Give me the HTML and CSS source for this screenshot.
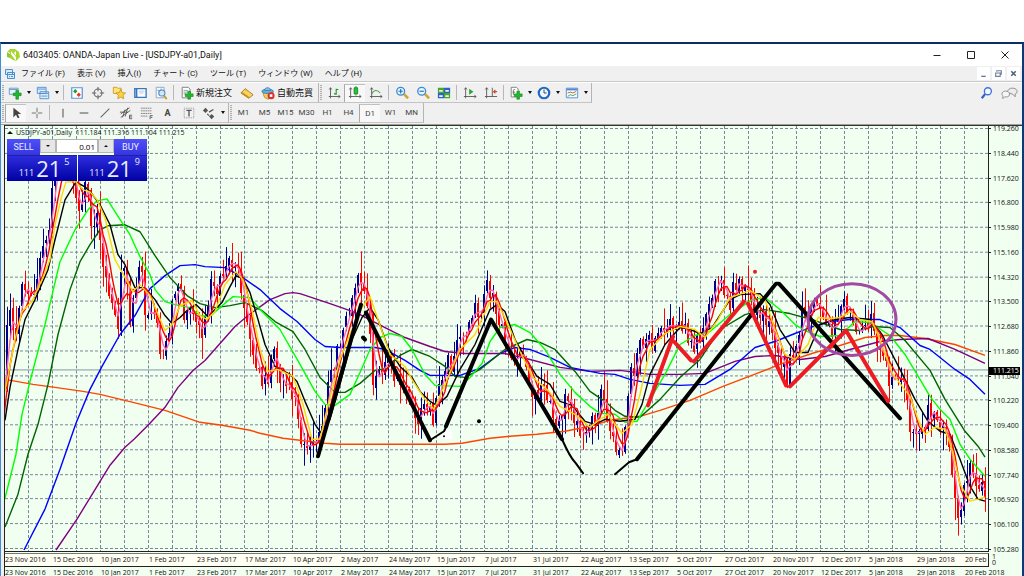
FILE: index.html
```
<!DOCTYPE html>
<html lang="ja">
<head>
    <meta charset="UTF-8">
    <meta name="viewport" content="width=device-width, initial-scale=1.0">
    <title>6403405: OANDA-Japan Live - [USDJPY-a01,Daily]</title>
    <link rel="stylesheet" href="styles.css">
</head>
<body>

<div class="window">
    <header class="titlebar">
        <svg class="logo" viewBox="0 0 14 14"><path d="M4 1h5l4 3 1 5-4 4-3-1-6-4V4z" fill="#a8d52d"/><path d="M4 5v7l-3-2V3zM5 3l5 6v4L5 6zM10 3v5L8 5z" fill="#fff"/><path d="M1 4l3 2v4L1 9z" fill="#8cc63f"/></svg>
        <h1>6403405: OANDA-Japan Live - [USDJPY-a01,Daily]</h1>
        <div class="window-buttons">
            <button type="button" aria-label="Minimize"><svg viewBox="0 0 10 10"><path d="M1.5 5.5h7" stroke="#222"/></svg></button>
            <button type="button" aria-label="Maximize"><svg viewBox="0 0 10 10"><path d="M1.5 1.5h7v7h-7z" fill="none" stroke="#222"/></svg></button>
            <button type="button" aria-label="Close"><svg viewBox="0 0 10 10"><path d="M1.5 1.5l7 7m0-7l-7 7" stroke="#222"/></svg></button>
        </div>
    </header>

    <nav class="menubar">
        <svg class="menu-logo" viewBox="0 0 12 12"><path d="M1.5 1.5h7v5h-7zM3.5 4.5h7v6h-7z" fill="#dcecfa" stroke="#4a8fd4"/><path d="M4 6.5h6M5 8.5h1m1 0h2" stroke="#4a8fd4"/></svg>
        <button type="button">ファイル (F)</button>
        <button type="button">表示 (V)</button>
        <button type="button">挿入(I)</button>
        <button type="button">チャート (C)</button>
        <button type="button">ツール (T)</button>
        <button type="button">ウィンドウ (W)</button>
        <button type="button">ヘルプ (H)</button>
        <div class="mdi-buttons">
            <button type="button" aria-label="Minimize chart"><svg viewBox="0 0 8 8"><path d="M2 6.5h4" stroke="#47637f"/></svg></button>
            <button type="button" aria-label="Restore chart"><svg viewBox="0 0 8 8"><path d="M2.5 2.5v-1h4v3h-1M1.5 3.5h4v3h-4z" fill="none" stroke="#6c8299"/></svg></button>
            <button type="button" aria-label="Close chart"><svg viewBox="0 0 8 8"><path d="M2 2l4 4m0-4L2 6" stroke="#47637f" stroke-width="1.4"/></svg></button>
        </div>
    </nav>

    <div class="toolbars">
        <div class="toolbar-row">
            <div class="toolbar">
                <button type="button" class="tool drop" aria-label="New chart"><svg viewBox="0 0 16 16"><path d="M1.500 2.500h10v7h-10z" fill="#e7f2fc" stroke="#5f94c9"/><path d="M2 4h9" stroke="#5f94c9"/><path d="M9 5h3v3h3v3h-3v4H9v-4H6V8h3z" fill="#1dbb2c" stroke="#13851e" stroke-width=".7"/></svg></button>
                <button type="button" class="tool drop" aria-label="Profiles"><svg viewBox="0 0 16 16"><path d="M1.500 1.500h10v7h-10zM4.500 6.500h10v8h-10z" fill="#dfeefb" stroke="#4d8acb"/><path d="M2 3.500h9M5 8.500h9M6 11.500h7" stroke="#4d8acb"/></svg></button>
                <span class="separator"></span>
                <button type="button" class="tool" aria-label="Market watch"><svg viewBox="0 0 16 16"><path d="M2 2h12v12H2z" fill="#fff" stroke="#5796d6" stroke-width="1.4"/><path d="M6 3.500l2.500 2.500L6 8.500 3.500 6z" fill="#12a72a"/><path d="M10 7.500l2.500 2.500-2.500 2.500L7.500 10z" fill="#e23a25"/></svg></button>
                <button type="button" class="tool" aria-label="Data window"><svg viewBox="0 0 16 16"><circle cx="8" cy="8" r="4.500" fill="none" stroke="#666" stroke-width="1.200"/><path d="M8 1v5m0 4v5M1 8h5m4 0h5" stroke="#666" stroke-width="1.200"/></svg></button>
                <button type="button" class="tool" aria-label="Navigator"><svg viewBox="0 0 16 16"><path d="M1.500 3.500v-2h4l1 1h4v6h-9z" fill="#ffe27a" stroke="#c79b2a"/><path d="M10 4l1.700 3.500 3.800.5-2.800 2.700.7 3.800-3.400-1.800L6.600 14.500l.7-3.800L4.500 8l3.800-.5z" fill="#ffd23c" stroke="#b98513" stroke-width=".8"/></svg></button>
                <button type="button" class="tool" aria-label="Terminal"><svg viewBox="0 0 16 16"><path d="M2 3h13v10H2z" fill="#f7fbff" stroke="#3b77bb" stroke-width="1.500"/><path d="M4 3v10" stroke="#3b77bb" stroke-width="2"/><path d="M7 6h6M7 8h5" stroke="#b7c8dc"/></svg></button>
                <button type="button" class="tool" aria-label="Strategy tester"><svg viewBox="0 0 16 16"><path d="M2.500 1.500h9v12h-9z" fill="#f5f9fd" stroke="#83a3c4"/><path d="M4 5h2v5M8 3v7" stroke="#5f94c9" fill="none"/><circle cx="9" cy="8" r="3.500" fill="#cfe6f8" stroke="#4f88c4" stroke-width="1.200"/><path d="M11.500 11l3 4" stroke="#c79b2a" stroke-width="2"/></svg></button>
                <span class="separator"></span>
                <button type="button" class="tool labelled"><svg viewBox="0 0 16 16"><path d="M2.500 1.500h7l2 2v10h-9z" fill="#fff" stroke="#777"/><path d="M4 5h5M4 7h5M4 9h3" stroke="#999"/><path d="M9 6h3v3h3v3h-3v3H9v-3H6V9h3z" fill="#1dbb2c" stroke="#13851e" stroke-width=".7"/></svg>新規注文</button>
                <button type="button" class="tool" aria-label="MetaEditor"><svg viewBox="0 0 16 16"><path d="M1 8l5-5 9 7-5 4z" fill="#f8d564" stroke="#a67614"/><path d="M1 8l9 6v-2L3 7z" fill="#c8901c"/><path d="M6 3c-1 2 1 3 2 3l6 4" fill="#e8b437"/></svg></button>
                <button type="button" class="tool labelled"><svg viewBox="0 0 16 16"><path d="M2 7l2 6 4 2 4-2 2-6z" fill="#f3cf65" stroke="#b48b24"/><ellipse cx="7.500" cy="6" rx="6.500" ry="2.500" fill="#6ab0df" stroke="#3277ac"/><path d="M4 5c0-4 7-4 7 0z" fill="#8cc7ec" stroke="#3277ac"/><circle cx="11.500" cy="11" r="4" fill="#df3024"/><path d="M10 9.500h3v3h-3z" fill="#fff"/></svg>自動売買</button>
            </div>
            <div class="toolbar">
                <button type="button" class="tool" aria-label="Bar chart"><svg viewBox="0 0 16 16"><path d="M4 2v12M2 12h13M2.500 4L4 2l1.500 2M13 10.500l2 1.500-2 1.500" fill="none" stroke="#555"/><path d="M10.500 3v7M10 4h3M8 9h2.500" stroke="#159b24" stroke-width="1.300"/></svg></button>
                <button type="button" class="tool pressed" aria-label="Candlesticks"><svg viewBox="0 0 16 16"><path d="M3 2v12M1 12h14M1.500 4L3 2l1.500 2M13 10.500l2 1.500-2 1.500" fill="none" stroke="#555"/><path d="M9 0v11" stroke="#159b24"/><path d="M7 2h4v7H7z" fill="#28c23a" stroke="#128821"/></svg></button>
                <button type="button" class="tool" aria-label="Line chart"><svg viewBox="0 0 16 16"><path d="M3 2v12M1 12h14M1.500 4L3 2l1.500 2M13 10.500l2 1.500-2 1.500" fill="none" stroke="#555"/><path d="M3 9c3-5 6-5 10-1" fill="none" stroke="#38a444" stroke-width="1.200"/></svg></button>
                <span class="separator"></span>
                <button type="button" class="tool" aria-label="Zoom in"><svg viewBox="0 0 16 16"><path d="M10 9l5 5" stroke="#d3a72e" stroke-width="3"/><circle cx="6.500" cy="6" r="4.500" fill="#e6f5ff" stroke="#3b89cf" stroke-width="1.500"/><path d="M4 6h5M6.500 3.500v5" stroke="#2370bd" stroke-width="1.300"/></svg></button>
                <button type="button" class="tool" aria-label="Zoom out"><svg viewBox="0 0 16 16"><path d="M10 9l5 5" stroke="#d3a72e" stroke-width="3"/><circle cx="6.500" cy="6" r="4.500" fill="#e6f5ff" stroke="#3b89cf" stroke-width="1.500"/><path d="M4 6h5" stroke="#2370bd" stroke-width="1.300"/></svg></button>
                <button type="button" class="tool" aria-label="Tile windows"><svg viewBox="0 0 16 16"><path d="M1 2h7v6H1zM8 8h7v6H8z" fill="#48a62b"/><path d="M8 2h7v6H8zM1 8h7v6H1z" fill="#2e62c9"/><path d="M2.500 4.500h4v2h-4zM9.500 4.500h4v2h-4zM2.500 10.500h4v2h-4zM9.500 10.500h4v2h-4z" fill="#eef6ee"/></svg></button>
                <span class="separator"></span>
                <button type="button" class="tool" aria-label="Auto scroll"><svg viewBox="0 0 16 16"><path d="M3 2v12M1 12h14M1.500 4L3 2l1.500 2M13 10.500l2 1.500-2 1.500" fill="none" stroke="#555"/><path d="M7 3l5 3.500L7 10z" fill="#2aa637"/></svg></button>
                <button type="button" class="tool" aria-label="Chart shift"><svg viewBox="0 0 16 16"><path d="M3 2v12M1 12h14M1.500 4L3 2l1.500 2M9.500 2v10" fill="none" stroke="#555"/><path d="M15 6.500h-4M13 4.500l-2 2 2 2" fill="none" stroke="#cf4a26" stroke-width="1.300"/></svg></button>
                <span class="separator"></span>
                <button type="button" class="tool drop" aria-label="Indicators"><svg viewBox="0 0 16 16"><path d="M2.500 1.500h6l2 2v9h-8z" fill="#fff" stroke="#777"/><path d="M5 10V5c0-1 1-1 2-1M4 7h3" fill="none" stroke="#666"/><path d="M9 6h3v3h3v3h-3v3H9v-3H6V9h3z" fill="#1dbb2c" stroke="#13851e" stroke-width=".7"/></svg></button>
                <button type="button" class="tool drop" aria-label="Periods"><svg viewBox="0 0 16 16"><circle cx="8" cy="8" r="6" fill="#eef7ff" stroke="#1e6ac2" stroke-width="2.500"/><path d="M8 4v4h3" fill="none" stroke="#333"/></svg></button>
                <button type="button" class="tool drop" aria-label="Templates"><svg viewBox="0 0 16 16"><path d="M1.500 2.500h13v11h-13z" fill="#f7fbff" stroke="#4d8acb"/><path d="M2 4h12" stroke="#4d8acb" stroke-width="2"/><path d="M3 8l3-1 3 1 4-2" fill="none" stroke="#c44b2d"/><path d="M3 12l3-2 3 1 4-2" fill="none" stroke="#35a045"/></svg></button>
            </div>
            <div class="toolbar-right">
                <button type="button" class="tool" aria-label="Search"><svg viewBox="0 0 16 16"><path d="M6 9l-4 5" stroke="#2d63c8" stroke-width="2.500"/><circle cx="9" cy="6" r="4" fill="#f4faff" stroke="#3a72da" stroke-width="1.500"/></svg></button>
                <button type="button" class="tool" aria-label="Messages"><svg class="wide-icon" viewBox="0 0 18 14"><path d="M7 7c-1-7 10-6 10-2 0 2-1 3-2 3v3l-3-3z" fill="#ececec" stroke="#8d8d8d"/><path d="M1 8c0-4 8-4 8 0s-4 3-5 3l-2 2V10c-1-1-1-1-1-2z" fill="#f6f6f6" stroke="#8d8d8d"/></svg></button>
            </div>
        </div>

        <div class="toolbar-row">
            <div class="toolbar">
                <button type="button" class="tool pressed" aria-label="Cursor"><svg viewBox="0 0 16 16"><path d="M5 2v11l3-3 2 4 2-1-2-4h4z" fill="#444"/></svg></button>
                <button type="button" class="tool" aria-label="Crosshair"><svg viewBox="0 0 16 16"><path d="M8 2v5m0 2v5M2 8h5m2 0h5" stroke="#666"/></svg></button>
                <span class="separator"></span>
                <button type="button" class="tool" aria-label="Vertical line"><svg viewBox="0 0 16 16"><path d="M8 3v10" stroke="#555" stroke-width="1.200"/></svg></button>
                <button type="button" class="tool" aria-label="Horizontal line"><svg viewBox="0 0 16 16"><path d="M3 8h10" stroke="#555" stroke-width="1.200"/></svg></button>
                <button type="button" class="tool" aria-label="Trendline"><svg viewBox="0 0 16 16"><path d="M3 13L13 3" stroke="#666" stroke-width="1.200"/></svg></button>
                <button type="button" class="tool" aria-label="Channel"><svg viewBox="0 0 16 16"><path d="M2 9l10-7M2 13L13 5M4 13l3-9M7 12l3-10M1 7h9" stroke="#555"/><path d="M15 10.500h-3v4h3M12 12.500h3" fill="none" stroke="#555"/></svg></button>
                <button type="button" class="tool" aria-label="Fibonacci"><svg viewBox="0 0 16 16"><path d="M1 2.500h12M1 5.500h12M1 8.500h12M1 11.500h8" stroke="#777" stroke-dasharray="2 .6"/><path d="M11.500 15v-4h3M12 13h2" fill="none" stroke="#555"/></svg></button>
                <button type="button" class="tool letter">A</button>
                <button type="button" class="tool" aria-label="Text label"><svg viewBox="0 0 16 16"><path d="M2.500 2.500h11v11h-11z" fill="none" stroke="#888" stroke-dasharray="1 1"/><path d="M5 5h6M8 5v7" stroke="#555" stroke-width="1.500"/></svg></button>
                <button type="button" class="tool drop" aria-label="Arrows"><svg viewBox="0 0 16 16"><path d="M4 2l3 3-3 3-3-3zM11 9l3 3-3 3-3-3z" fill="#555"/><path d="M6 9l2 2M8 7l5-3" stroke="#555" stroke-width="1.500"/></svg></button>
            </div>
            <div class="toolbar">
                <button type="button" class="tool">M1</button>
                <button type="button" class="tool">M5</button>
                <button type="button" class="tool">M15</button>
                <button type="button" class="tool">M30</button>
                <button type="button" class="tool">H1</button>
                <button type="button" class="tool">H4</button>
                <button type="button" class="tool pressed">D1</button>
                <button type="button" class="tool">W1</button>
                <button type="button" class="tool">MN</button>
            </div>
        </div>
    </div>

    <main class="chart">
        <div class="plot">
            <svg class="plot-drawing" id="plot" viewBox="5 126 983 426" preserveAspectRatio="none">
                <g id="grid" class="grid-lines"></g>
                <path class="price-line" d="M5 370.500H988"/>
                <g id="candles"></g>
                <g id="averages" class="averages"></g>
                <g class="marks">
                    <path d="M442 431h10v9h-10z" fill="#fff" stroke="none"/>
                    <path d="M318 457L361 305M366 313L430 441M446 427L491 320L562 440M637 460L776 284H779L900 419"/>
                    <path class="thin" d="M430 441L444 432L448 424M562 440Q570 458 575 463L583 474M615 475L629 463L637 460"/>
                    <path d="M363 338l2 2"/>
                    <path class="red" d="M648 406L673 337M674 342L691 361M694 362L744 302M748 304L786 386M790 387L846 331L888 402"/>
                    <ellipse class="purple" cx="852" cy="320" rx="44" ry="36"/>
                    <circle class="dot" cx="479" cy="422" r="2"/>
                    <circle class="dot" cx="444" cy="437" r="1"/>
                    <circle class="dot-red" cx="755" cy="272" r="2"/>
                </g>
            </svg>
            <div class="overlay">
                <p class="quote"><span class="triangle"></span>USDJPY-a01,Daily&nbsp; 111.184 111.316 111.104 111.215</p>
                <div class="trade">
                    <div class="trade-top">
                        <button type="button" class="side">SELL</button>
                        <button type="button" class="step" aria-label="Decrease volume"><span class="arrow-down"></span></button>
                        <input type="text" value="0.01" aria-label="Volume">
                        <button type="button" class="step" aria-label="Increase volume"><span class="arrow-up"></span></button>
                        <button type="button" class="side">BUY</button>
                    </div>
                    <div class="trade-prices">
                        <button type="button" class="price"><small>111</small><b>21</b><sup>5</sup></button>
                        <button type="button" class="price"><small>111</small><b>21</b><sup>9</sup></button>
                    </div>
                </div>
            </div>
        </div>
        <div class="price-axis">
            <ol id="prices"></ol>
            <span class="current-price">111.215</span>
        </div>
        <ol class="dates" id="dates"></ol>
        <div class="sub-axis"><span>1</span><span>0</span></div>
        <ol class="dates next" id="nextDates"></ol>
    </main>
</div>

<script src="chart.js"></script>
</body>
</html>
```
FILE: styles.css
```
* {
    margin: 0;
    padding: 0;
    box-sizing: border-box;
}

html {
    height: 100%;
}

body {
    height: 100%;
    padding-top: 42px;
    overflow: hidden;
    background: #fff;
    font-family: Roboto, "Noto Sans CJK JP", sans-serif;
    font-size: 9px;
    color: #111;
}

button {
    border: 0;
    background: none;
    font: inherit;
    color: inherit;
    white-space: nowrap;
}

svg {
    display: block;
}

ol {
    list-style: none;
}

.window {
    display: flex;
    flex-direction: column;
    height: 100%;
    border-top: 2px solid #0b2c66;
    border-left: 1px solid #3f8fd6;
    border-right: 2px solid #0b3a7c;
    background: #f0f0f0;
    overflow: hidden;
}

.titlebar {
    display: flex;
    align-items: center;
    flex: 0 0 22px;
    padding-left: 5px;
    background: #fff;
}

.logo {
    width: 14px;
    height: 14px;
}

.titlebar h1 {
    margin-left: 3px;
    font-size: 9px;
    font-weight: normal;
}

.window-buttons {
    display: flex;
    margin-left: auto;
}

.window-buttons button {
    display: flex;
    justify-content: center;
    width: 34px;
}

.window-buttons svg {
    width: 10px;
    height: 10px;
}

.menubar {
    display: flex;
    align-items: center;
    flex: 0 0 16px;
    gap: 12px;
    padding-left: 3px;
    border-bottom: 1px solid #c8c8c8;
    font-size: 8px;
    line-height: 14px;
}

.menu-logo {
    width: 12px;
    height: 12px;
    margin-right: -7px;
}

.mdi-buttons {
    display: flex;
    gap: 2px;
    margin-left: auto;
    padding-right: 2px;
}

.mdi-buttons button {
    width: 13px;
    height: 13px;
    padding: 2px;
    background: #fff;
}

.toolbars {
    flex: 0 0 43px;
    border-top: 1px solid #fff;
    border-bottom: 1px solid #a0a0a0;
}

.toolbar-row {
    display: flex;
    height: 20px;
}

.toolbar {
    display: flex;
    align-items: center;
    padding-right: 1px;
    border-right: 1px solid #b4b4b4;
    border-bottom: 1px solid #c4c4c4;
}

.toolbar::before {
    content: "";
    width: 2px;
    height: 15px;
    margin: 0 1px;
    background: repeating-linear-gradient(#b0b0b0 0 1px, #e8e8e8 1px 2px);
}

.toolbar-right {
    display: flex;
    gap: 2px;
    align-items: center;
    margin-left: auto;
    padding-right: 2px;
}

.tool {
    display: flex;
    align-items: center;
    justify-content: center;
    gap: 2px;
    width: 21px;
    height: 18px;
    font-size: 8px;
    color: #444;
}

.tool svg {
    width: 14px;
    height: 14px;
    flex: none;
}

.tool .wide-icon {
    width: 17px;
}

.tool.letter {
    font-size: 9px;
    font-weight: bold;
}

.tool.drop {
    width: 28px;
}

.tool.drop::after {
    content: "";
    border: 2px solid transparent;
    border-top: 3px solid #111;
    border-bottom: 0;
    margin-left: 3px;
}

.tool.labelled {
    width: 60px;
    font-size: 9px;
    color: #111;
}

.tool.pressed {
    background: #f8f8f8;
    border-left: 1px solid #a8a8a8;
    border-top: 1px solid #c0c0c0;
}

.separator {
    width: 1px;
    height: 15px;
    margin: 0 2px;
    background: #b8b8b8;
}

.chart {
    display: grid;
    grid-template-columns: minmax(0, 1fr) 33px;
    grid-template-rows: minmax(0, 1fr) 15px 9px;
    flex: 1;
    min-height: 0;
    margin-left: 3px;
    border-top: 1px solid #333;
    border-left: 1px solid #222;
    background: #f0fff0;
    font-family: "Open Sans", sans-serif;
    font-size: 7px;
}

.plot {
    position: relative;
    min-height: 0;
    border-right: 1px solid #222;
    border-bottom: 1px solid #222;
}

.plot-drawing {
    width: 100%;
    height: 100%;
}

.grid-lines {
    stroke: #778899;
    stroke-dasharray: 3 2;
    shape-rendering: crispEdges;
}

.price-line {
    stroke: #8496a6;
}

.averages path {
    fill: none;
    stroke-width: 1.400;
    stroke-linejoin: round;
}

.marks {
    fill: none;
    stroke: #000;
    stroke-width: 4;
    stroke-linecap: round;
    stroke-linejoin: round;
}

.marks .thin {
    stroke-width: 2;
}

.marks .red {
    stroke: #ed1c24;
}

.marks .purple {
    stroke: #a349a4;
    stroke-width: 3;
}

.dot {
    fill: #000;
    stroke: none;
}

.dot-red {
    fill: #ed1c24;
    stroke: none;
}

.overlay {
    position: absolute;
    top: 0;
    left: 0;
}

.quote {
    display: flex;
    align-items: center;
    gap: 3px;
    height: 13px;
    padding-left: 2px;
}

.triangle {
    border: 3px solid transparent;
    border-bottom-color: #111;
    border-top: 0;
}

.trade {
    width: 140px;
    margin-left: 2px;
    background: #f0fff0;
    color: #e9edff;
    font-family: "Open Sans", sans-serif;
}

.trade-top {
    display: flex;
    height: 16px;
}

.side {
    width: 33px;
    background: linear-gradient(#5050fa, #3535e0);
    font-family: Roboto, sans-serif;
    font-size: 9px;
}

.trade-top input {
    width: 42px;
    height: 14px;
    border: 1px solid #b5b5b5;
    background: #fff;
    padding-right: 2px;
    text-align: right;
    font: inherit;
    font-size: 8px;
}

.step {
    display: flex;
    align-items: center;
    justify-content: center;
    flex: 1;
    height: 14px;
    background: #e6e6e6;
    border: 1px solid #b5b5b5;
}

.arrow-down,
.arrow-up {
    border: 2px solid transparent;
}

.arrow-down {
    border-top-color: #111;
    border-bottom: 0;
}

.arrow-up {
    border-bottom-color: #111;
    border-top: 0;
}

.trade-prices {
    display: flex;
    gap: 1px;
}

.price {
    display: flex;
    flex: 1;
    justify-content: flex-end;
    align-items: flex-end;
    height: 26px;
    padding: 0 7px 1px 0;
    border-top: 1px solid #2020a0;
    background: linear-gradient(#2c2cdc, #0000a4);
}

.price small {
    font-size: 9px;
    line-height: 14px;
}

.price b {
    margin: 0 3px 0 2px;
    font-size: 22px;
    font-weight: normal;
    line-height: 23px;
}

.price sup {
    align-self: flex-start;
    font-size: 9px;
    line-height: 12px;
}

.price-axis {
    position: relative;
}

.price-axis ol {
    display: flex;
    flex-direction: column;
    justify-content: space-between;
    height: 100%;
}

.price-axis li {
    display: flex;
    align-items: center;
    gap: 2px;
    height: 5px;
    line-height: 5px;
}

.price-axis li::before {
    content: "";
    width: 2px;
    height: 1px;
    background: #222;
}

.current-price {
    position: absolute;
    top: 56.5%;
    left: 0;
    width: 31px;
    padding-left: 4px;
    background: #000;
    color: #fff;
    line-height: 8px;
}

.dates {
    display: grid;
    grid-template-columns: repeat(21, 48px);
    overflow: hidden;
    margin-top: 1px;
    border-top: 1px solid #777;
    border-right: 1px solid #222;
    border-bottom: 1px solid #222;
    background: #fffff4;
    line-height: 12px;
    white-space: nowrap;
}

.dates.next {
    grid-column: 1 / -1;
    margin-top: 0;
    border: 0;
    background: none;
}

.sub-axis {
    display: flex;
    flex-direction: column;
    padding: 2px 0 0 3px;
    line-height: 6px;
}
```
FILE: chart.js
```
const BAR = 3;
const svgNS = 'http://www.w3.org/2000/svg';

const prices = ['119.260', '118.440', '117.620', '116.800', '115.980', '115.160', '114.320', '113.500', '112.680',
    '111.860', '111.040', '110.220', '109.400', '108.580', '107.740', '106.920', '106.100', '105.280'];

const dates = ['23 Nov 2016', '15 Dec 2016', '10 Jan 2017', '1 Feb 2017', '23 Feb 2017', '17 Mar 2017', '10 Apr 2017',
    '2 May 2017', '24 May 2017', '15 Jun 2017', '7 Jul 2017', '31 Jul 2017', '22 Aug 2017', '13 Sep 2017', '5 Oct 2017',
    '27 Oct 2017', '20 Nov 2017', '12 Dec 2017', '5 Jan 2018', '29 Jan 2018', '20 Feb 2018'];

// x,y turning points of the daily close
const closes = `-12,470 -4,430 4,380 8,310 12,330 17,340 20,285 27,295 33,300 38,285 42,250 48,235 52,190 56,160 70,165 76,200
82,210 87,180 92,245 98,215 103,265 110,300 118,325 122,265 127,285 130,322 137,275 141,265 146,320 152,310 160,345
164,355 170,320 176,285 180,275 185,320 190,300 195,310 201,345 205,325 212,275 218,290 228,262 235,260 240,290
248,330 255,370 262,385 268,380 274,355 282,385 290,380 296,410 302,440 310,450 316,445 322,420 328,380 335,360
342,330 350,315 355,285 360,283 364,300 368,300 373,380 380,370 388,355 395,375 403,385 410,395 416,425 424,405
432,420 440,385 446,360 453,365 460,335 468,330 475,305 480,315 485,290 490,290 494,300 500,330 508,345 515,365
520,355 530,385 537,400 545,390 550,395 556,425 561,430 567,390 573,415 578,435 585,430 595,425 602,395 610,430
618,465 624,430 630,380 640,350 645,335 650,345 660,320 668,330 676,325 685,325 692,355 700,340 710,305 715,290
722,285 728,308 735,285 740,287 748,300 755,310 762,315 768,320 773,345 780,365 787,375 795,345 802,320 810,305
820,310 826,325 832,330 838,310 845,305 852,312 860,335 866,318 872,315 878,355 886,370 893,385 900,370 905,395
911,435 918,445 925,425 930,405 935,425 942,430 948,450 953,490 958,520 964,490 970,460 975,490 981,480 986,515`;

const averages = [
    ['#ff4500', `5,380 33,385 55,388 83,392 100,395 133,403 165,411 200,423 222,426 250,431 260,434 283,439 325,444 340,445
        445,445 462,444 490,439 510,437 537,435 565,432 590,427 610,421 640,417 660,411 690,401 723,387 757,374 785,363
        815,353 840,346 865,338 885,336 900,336 925,339 955,345 985,356`],
    ['#800080', `56,551 77,520 110,466 125,448 134,440 148,426 165,408 178,388 193,371 205,361 235,327 248,316 270,300
        285,294 293,293 300,294 330,304 350,311 360,315 385,328 405,338 430,347 445,352 465,354 505,354 530,360 560,368
        590,372 620,371 650,375 680,375 705,374 735,362 755,357 775,356 800,360 825,357 850,350 880,342 900,340 928,339
        955,350 985,364`],
    ['#0000ff', `24,551 45,510 60,470 76,424 90,390 102,367 120,335 135,316 150,289 165,276 180,266 195,265 205,267 225,268
        240,276 260,290 280,309 297,322 315,340 325,347 340,348 375,348 385,350 405,361 420,371 430,376 460,376 480,369
        500,354 515,348 530,350 550,358 570,368 600,374 615,375 630,380 650,384 680,386 705,385 730,370 755,348 775,342
        795,334 810,328 830,322 850,320 880,320 900,328 920,346 930,350 955,370 970,380 985,395`],
    ['#006400', `5,528 18,495 28,455 38,425 48,385 58,335 70,290 80,262 90,245 100,230 108,226 125,225 140,232 155,256
        170,278 187,296 200,304 215,308 230,306 245,303 262,311 275,322 293,332 305,350 320,378 335,393 345,393 360,384
        375,371 387,369 400,356 412,350 430,357 445,367 455,377 465,378 480,370 505,350 527,340 540,343 555,350 575,372
        590,392 605,402 615,411 625,417 640,418 660,400 680,378 700,360 720,330 745,315 765,310 790,314 815,321 840,330
        860,331 873,327 890,328 905,341 930,371 945,400 965,432 978,447 985,458`],
    ['#00ff00', `5,499 16,455 22,415 30,382 45,325 60,262 75,230 88,210 97,201 107,199 117,215 130,235 140,257 150,275
        155,290 165,302 175,305 190,308 200,316 210,317 220,308 233,297 250,298 262,312 280,330 300,365 315,392 325,405
        335,406 350,395 360,373 370,350 380,338 390,334 402,337 412,350 425,375 435,386 460,387 470,378 482,364 490,342
        500,328 515,325 530,333 545,350 560,375 575,393 590,407 600,414 615,415 625,423 637,422 650,400 665,375 680,345
        695,336 710,332 730,315 752,300 765,298 780,310 795,325 805,331 820,337 840,336 855,322 870,323 890,336 905,355
        920,380 930,397 940,410 950,420 960,445 970,460 985,477`],
    ['#000000', `5,421 10,388 18,350 25,320 35,300 48,270 55,240 65,200 76,182 85,187 92,194 100,205 110,225 118,255
        125,265 135,288 145,288 155,300 165,316 172,324 180,318 188,310 196,305 208,317 222,303 230,287 236,276 243,279
        250,293 258,320 265,345 275,367 290,375 297,382 305,402 315,425 322,435 330,420 340,385 352,340 362,318 370,308
        378,320 388,348 400,367 412,378 420,392 430,402 437,406 447,397 460,370 475,345 490,310 497,305 505,312 515,340
        528,363 537,377 550,385 560,402 572,406 585,422 595,425 605,420 620,422 635,420 642,405 650,375 665,345 680,328
        688,329 700,334 712,328 730,300 740,295 760,294 770,305 780,330 795,353 808,353 820,325 835,320 850,318 870,320
        882,335 900,370 915,400 928,422 940,432 950,435 960,460 970,487 978,500 985,502`]
];

const yellow = `5,392 15,340 22,312 32,302 42,280 50,260 55,225 62,195 66,182 76,182 83,190 90,192 97,200 105,218 115,260
125,278 133,292 140,285 150,296 158,315 165,331 172,325 180,306 192,301 200,316 207,320 215,312 225,285 236,272 243,280
252,310 260,350 268,372 278,370 293,377 303,405 312,440 320,440 327,410 340,360 352,330 362,308 370,297 378,320 390,355
405,367 412,380 425,400 434,410 445,385 460,350 475,335 490,302 497,302 508,325 520,352 533,378 548,391 560,407 575,415
590,428 600,420 608,415 615,425 622,434 632,425 640,395 650,350 665,334 680,327 695,330 705,338 718,320 730,298 750,291
765,300 775,330 785,355 795,360 808,345 818,318 830,319 840,318 850,312 860,320 872,322 880,340 893,375 910,397 918,420
925,435 935,428 945,430 952,450 960,485 970,502 978,500 985,498`;

function parse(text) {
    return text.trim().split(/\s+/).map(pair => pair.split(',').map(Number));
}

function valueAt(points, x) {
    const i = Math.max(1, points.findIndex(p => p[0] >= x));
    const [x1, y1] = points[i - 1];
    const [x2, y2] = points[i];
    return y1 + (y2 - y1) * (x - x1) / (x2 - x1);
}

function noise(n) {
    const v = Math.sin(n * 127.1) * 43758.5453;
    return v - Math.floor(v);
}

function draw(parent, d, stroke, width) {
    const path = document.createElementNS(svgNS, 'path');
    path.setAttribute('d', d);
    path.setAttribute('stroke', stroke);
    if (width) path.setAttribute('stroke-width', width);
    parent.appendChild(path);
    return path;
}

function toPath(points) {
    return 'M' + points.map(p => p.join(' ')).join('L');
}

// Grid
const grid = document.getElementById('grid');
for (let x = 28.5; x < 988; x += 24) draw(grid, `M${x} 126V552`, '#778899');
for (let i = 0; i < 18; i++) draw(grid, `M5 ${Math.round(128 + i * 24.75) + 0.5}H988`, '#778899');

// Candles
const candles = document.getElementById('candles');
candles.setAttribute('shape-rendering', 'crispEdges');
const path = parse(closes);
const bars = [];
for (let x = -8; x <= 986; x += BAR) {
    bars.push([x, valueAt(path, x) + (noise(x) - 0.5) * 20]);
}
for (let i = 1; i < bars.length; i++) {
    const [x, close] = bars[i];
    if (x < 5) continue;
    const open = bars[i - 1][1] + (noise(x + 500) - 0.5) * 6;
    const color = close < open ? '#000090' : '#ff0000';
    const high = Math.min(open, close) - 2 - noise(x + 50) ** 2 * 20;
    const low = Math.max(open, close) + 2 + noise(x + 90) ** 2 * 20;
    draw(candles, `M${x + 0.5} ${high}V${low}`, color, 1);
    draw(candles, `M${x} ${open}V${close}`, color, 2);
}

// Moving averages
const lines = document.getElementById('averages');
averages.forEach(([color, text]) => draw(lines, toPath(parse(text)), color));

function movingAverage(length) {
    return bars.map((bar, i) => {
        const part = bars.slice(Math.max(0, i - length + 1), i + 1);
        return [bar[0], part.reduce((sum, b) => sum + b[1], 0) / part.length];
    });
}
draw(lines, toPath(movingAverage(3)), '#ff69b4');
draw(lines, toPath(movingAverage(5)), '#ff0000');
draw(lines, toPath(parse(yellow)), '#ffd700');

// Axis labels
function fill(id, labels) {
    const list = document.getElementById(id);
    labels.forEach(label => {
        const item = document.createElement('li');
        item.textContent = label;
        list.appendChild(item);
    });
}
fill('prices', prices);
fill('dates', dates);
fill('nextDates', dates);
```
